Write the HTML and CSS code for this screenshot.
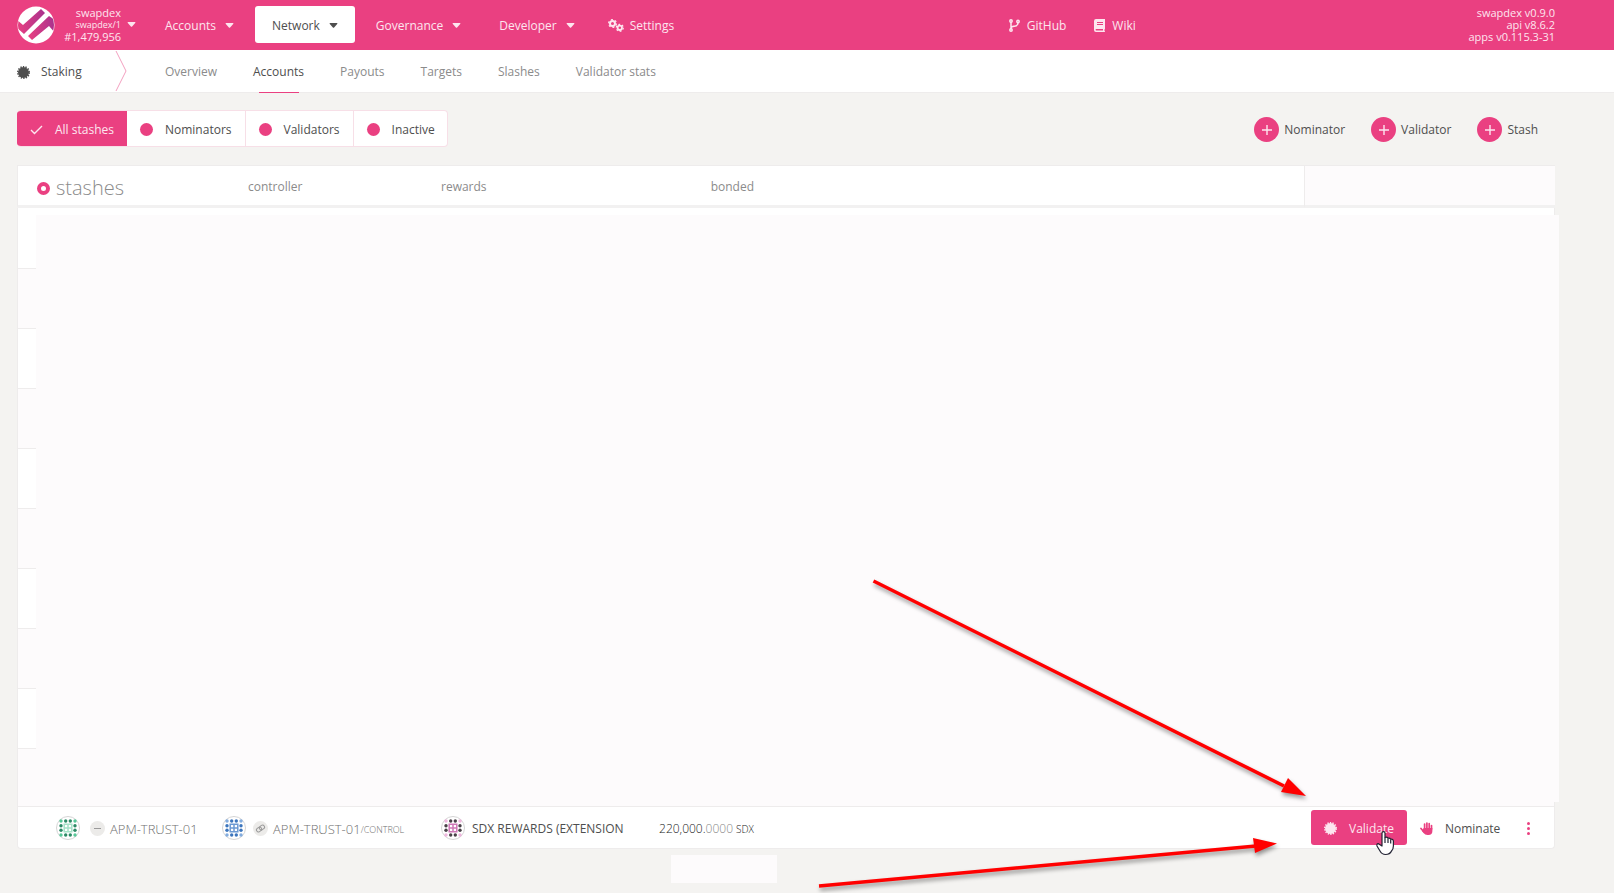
FILE: index.html
```html
<!DOCTYPE html>
<html lang="en">
<head>
<meta charset="utf-8">
<title>Staking accounts</title>
<link rel="stylesheet" href="styles.css">
</head>
<body>
<svg class="defs" aria-hidden="true">
  <defs>
    <linearGradient id="brand" x1="0" x2="1"><stop offset="0" stop-color="#ea4081"/><stop offset="1" stop-color="#a8328e"/></linearGradient>
    <symbol id="caret" viewBox="0 0 8 5"><path fill="currentColor" d="M.6 0h6.8q.9.300.300 1L4.600 4.600q-.6.500-1.200 0L.3 1Q-.3.300.600 0z"/></symbol>
    <symbol id="plus" viewBox="0 0 12 12"><path d="M6 1v10M1 6h10" stroke="currentColor" stroke-width="1.400" fill="none"/></symbol>
    <symbol id="cert" viewBox="0 0 20 20"><circle cx="10" cy="10" r="8.300" fill="currentColor"/><circle cx="10" cy="10" r="8.700" fill="none" stroke="currentColor" stroke-width="2.600" stroke-dasharray="2 1.904"/></symbol>
    <symbol id="ident" viewBox="0 0 24 24">
      <circle cx="12" cy="12" r="11.500" fill="#fff" stroke="#d4d4d4"/>
      <g fill="var(--dark)"><circle cx="9.700" cy="5" r="1.700"/><circle cx="14.300" cy="5" r="1.700"/><circle cx="9.700" cy="19" r="1.700"/><circle cx="14.300" cy="19" r="1.700"/><circle cx="5" cy="9.700" r="1.700"/><circle cx="5" cy="14.300" r="1.700"/><circle cx="19" cy="9.700" r="1.700"/><circle cx="19" cy="14.300" r="1.700"/></g>
      <g fill="var(--light)"><circle cx="5" cy="5" r="1.700"/><circle cx="19" cy="5" r="1.700"/><circle cx="5" cy="19" r="1.700"/><circle cx="19" cy="19" r="1.700"/></g>
      <path d="M8.200 8.200h7.600v7.600H8.200zM12 8.200v7.600M8.200 12h7.600" stroke="var(--mid)" stroke-width="1.500" fill="none"/>
    </symbol>
  </defs>
</svg>

<header class="topbar">
  <div class="brand">
    <svg class="logo" viewBox="0 0 38 38" aria-hidden="true">
      <defs><clipPath id="disc"><circle cx="19" cy="19" r="18"/></clipPath></defs>
      <circle cx="19" cy="19" r="18.500" fill="#fff"/>
      <g clip-path="url(#disc)" fill="url(#brand)">
        <path d="M0 14 6 19 24 3 28 7 7 28 0 22z"/>
        <path d="M11 30 32 10 38 14V27L32 20 15 34z"/>
      </g>
    </svg>
    <button class="chain" type="button">
      <span class="chain-text"><span>swapdex</span><span class="tiny">swapdex/1</span><span>#1,479,956</span></span>
      <svg class="caret" aria-hidden="true"><use href="#caret"/></svg>
    </button>
  </div>
  <nav class="menu" aria-label="Main">
    <a href="#accounts">Accounts<svg class="caret" aria-hidden="true"><use href="#caret"/></svg></a>
    <a class="current" href="#network">Network<svg class="caret" aria-hidden="true"><use href="#caret"/></svg></a>
    <a href="#governance">Governance<svg class="caret" aria-hidden="true"><use href="#caret"/></svg></a>
    <a href="#developer">Developer<svg class="caret" aria-hidden="true"><use href="#caret"/></svg></a>
    <a class="settings" href="#settings"><svg class="gears" viewBox="0 0 16 13" fill="none" stroke="currentColor" aria-hidden="true"><circle cx="4.500" cy="4.500" r="2.500" stroke-width="2"/><circle cx="4.500" cy="4.500" r="3.900" stroke-width="1.200" stroke-dasharray="2 2.080"/><circle cx="11.800" cy="8.800" r="2.200" stroke-width="1.800"/><circle cx="11.800" cy="8.800" r="3.500" stroke-width="1.200" stroke-dasharray="1.800 1.860"/></svg>Settings</a>
  </nav>
  <nav class="links" aria-label="External">
    <a href="#github"><svg width="11" height="13" viewBox="0 0 11 13" fill="none" stroke="currentColor" stroke-width="1.500" aria-hidden="true"><circle cx="2" cy="2" r="1.200"/><circle cx="9" cy="2.500" r="1.200"/><circle cx="2" cy="11" r="1.200"/><path d="M2 3v7M9 4c0 3-2 3-4 3.200C3.500 7.400 2 8 2 9"/></svg>GitHub</a>
    <a href="#wiki"><svg width="11" height="13" viewBox="0 0 11 13" aria-hidden="true"><path fill="currentColor" fill-rule="evenodd" d="M2 0h9v10l-.5.500v1.500l.5.500v.5H2q-2 0-2-2V2Q0 0 2 0zM3 3v1h6V3zm0 2v1h6V5zM2 10q-1 .7 0 1.500h7V10z"/></svg>Wiki</a>
  </nav>
  <div class="versions"><span>swapdex v0.9.0</span><span>api v8.6.2</span><span>apps v0.115.3-31</span></div>
</header>

<nav class="tabs" aria-label="Staking">
  <div class="section"><svg class="cert" aria-hidden="true"><use href="#cert"/></svg><span>Staking</span></div>
  <svg class="chevron" viewBox="0 0 12 42" aria-hidden="true"><path d="M1 1 11 21 1 41" fill="none" stroke="#f3a0c0"/></svg>
  <a href="#overview">Overview</a>
  <a class="active" href="#accounts">Accounts</a>
  <a href="#payouts">Payouts</a>
  <a href="#targets">Targets</a>
  <a href="#slashes">Slashes</a>
  <a href="#stats">Validator stats</a>
</nav>

<main>
  <div class="toolbar">
    <div class="filters">
      <button type="button" class="on"><svg class="mark" viewBox="0 0 13 13" aria-hidden="true"><path d="M1 7l3.500 3.500L12 3" fill="none" stroke="currentColor" stroke-width="1.400"/></svg>All stashes</button>
      <button type="button"><span class="mark dot"></span>Nominators</button>
      <button type="button"><span class="mark dot"></span>Validators</button>
      <button type="button"><span class="mark dot"></span>Inactive</button>
    </div>
    <div class="adders">
      <button type="button"><span class="round"><svg aria-hidden="true"><use href="#plus"/></svg></span>Nominator</button>
      <button type="button"><span class="round"><svg aria-hidden="true"><use href="#plus"/></svg></span>Validator</button>
      <button type="button"><span class="round"><svg aria-hidden="true"><use href="#plus"/></svg></span>Stash</button>
    </div>
  </div>

  <div class="stashes">
    <table>
      <colgroup><col class="c-stash"><col class="c-controller"><col class="c-rewards"><col class="c-bonded"><col><col class="c-actions"></colgroup>
      <thead>
        <tr>
          <th scope="col" class="title"><span class="ring"></span><span>stashes</span></th>
          <th scope="col" class="controller">controller</th>
          <th scope="col">rewards</th>
          <th scope="col" class="num">bonded</th>
          <td></td>
          <td class="blank"></td>
        </tr>
      </thead>
      <tbody>
        <tr><td colspan="6"></td></tr>
        <tr><td colspan="6"></td></tr>
        <tr><td colspan="6"></td></tr>
        <tr><td colspan="6"></td></tr>
        <tr><td colspan="6"></td></tr>
        <tr><td colspan="6"></td></tr>
        <tr><td colspan="6"></td></tr>
        <tr><td colspan="6"></td></tr>
        <tr><td colspan="6"></td></tr>
        <tr><td colspan="6"></td></tr>
        <tr class="account">
          <td class="first"><div class="address"><svg class="ident green" aria-hidden="true"><use href="#ident"/></svg><span class="badge"><svg viewBox="0 0 15 15" aria-hidden="true"><path d="M4 7.500h7" stroke="#9a9a9a" fill="none"/></svg></span><span class="name">APM-TRUST-01</span></div></td>
          <td><div class="address"><svg class="ident blue" aria-hidden="true"><use href="#ident"/></svg><span class="badge"><svg viewBox="0 0 15 15" aria-hidden="true"><g fill="none" stroke="#9a9a9a" transform="rotate(-35 7.500 7.500)"><rect x="3" y="5.500" width="5.500" height="4" rx="2"/><rect x="6.500" y="5.500" width="5.500" height="4" rx="2"/></g></svg></span><span class="name">APM-TRUST-01<small>/CONTROL</small></span></div></td>
          <td><div class="address"><svg class="ident pink" aria-hidden="true"><use href="#ident"/></svg><span class="name strong">SDX REWARDS (EXTENSION</span></div></td>
          <td class="num balance">220,000.<span class="faint">0000</span> <span class="unit">SDX</span></td>
          <td></td>
          <td>
            <div class="actions">
              <button type="button" class="primary"><svg class="cert" aria-hidden="true"><use href="#cert"/></svg>Validate</button>
              <button type="button"><svg class="hand" viewBox="0 0 13 13" aria-hidden="true"><g stroke="#ea4081" stroke-width="1.700" stroke-linecap="round" fill="none"><path d="M4.600 7V2M6.900 7V1M9.200 7V1.500M11.500 7V3.500M1 6.500l2.500 3"/></g><path fill="#ea4081" d="M3.700 6h8.700v3q0 4-4 4H7.500Q5 13 3.500 11L2 9z"/></svg>Nominate</button>
              <button type="button" class="more" aria-label="More actions"><span></span><span></span><span></span></button>
            </div>
          </td>
        </tr>
      </tbody>
    </table>
    <div class="cover"></div>
  </div>
  <div class="note"></div>
</main>

<svg class="annotations" viewBox="0 0 1614 893" aria-hidden="true">
  <g class="arrows" fill="#f00">
    <path d="M873.500 581 1284 786" stroke="#f00" stroke-width="3.500"/>
    <path d="M1306 796 1288 778 1281 792z"/>
    <path d="M819 886 1256 846" stroke="#f00" stroke-width="3.500"/>
    <path d="M1277 843.500 1253 838 1255 853z"/>
  </g>
  <g transform="translate(1376 831)" stroke="#222233" stroke-width="1.200" stroke-linejoin="round">
    <path d="M6 2q0-1.400 1.500-1.400T9 2v4.500q2-.8 3 .7 1.800-.6 2.700.9 2.300-.3 2.700 1.700V15q0 3-1.900 5-1.500 3.500-6 3.500-3.500 0-5.500-3.500L1 15q-.6-2.500 1.500-2.300L6 15z" fill="#fff"/>
    <path d="M9 6.500V12M12 7.500V12M14.700 8.500V12.500" fill="none"/>
  </g>
</svg>
</body>
</html>
```

FILE: styles.css
```css
* { box-sizing: border-box; }
:root { --pink: #ea4081; --text: #4e4e4e; --muted: #8b8b8b; --tint: #fdfbfc; --line: #eeecec; }
body { margin: 0; position: relative; min-height: 100vh; overflow-x: hidden; background: #f4f3f1; color: var(--text); font: 400 12px/18px "Open Sans", "Noto Sans", sans-serif; }
a { color: inherit; text-decoration: none; }
button { font: inherit; color: inherit; background: none; border: 0; padding: 0; margin: 0; cursor: pointer; }
svg { display: block; flex: none; }
.defs { position: absolute; width: 0; height: 0; }
.caret { width: 9px; height: 5px; }
.cert { width: 13px; height: 13px; }

.topbar { position: relative; display: flex; align-items: center; height: 50px; padding: 0 59px 1px 17px; background: var(--pink); color: #fde6ef; }
.brand { display: flex; align-items: center; justify-content: space-between; width: 119px; margin-right: 12px; }
.logo { width: 38px; height: 38px; }
.chain { display: flex; align-items: center; gap: 6px; }
.chain-text, .versions { display: flex; flex-direction: column; text-align: right; font-size: 11px; line-height: 12px; }
.tiny { font-size: 9px; }
.menu { display: flex; gap: 4px; }
.menu a { display: flex; align-items: center; justify-content: space-between; gap: 9px; height: 37px; padding: 2px 17px 0; border-radius: 3px; }
.menu .current { background: #fff; color: var(--text); }
.menu .settings { gap: 6px; padding-left: 12px; }
.gears { width: 16px; height: 13px; }
.links { position: absolute; left: 62.5%; display: flex; gap: 28px; padding-top: 2px; }
.links a { display: flex; align-items: center; gap: 7px; }
.versions { margin-left: auto; }

.tabs { display: flex; align-items: center; height: 43px; padding-left: 17px; background: #fff; border-bottom: 1px solid var(--line); color: var(--muted); }
.section { display: flex; align-items: center; gap: 11px; width: 98px; padding-top: 2px; color: var(--text); }
.chevron { width: 12px; height: 42px; margin-right: 20px; }
.tabs a { display: flex; flex-direction: column; justify-content: center; align-items: center; position: relative; height: 43px; padding: 2px 18px 0; }
.tabs .active { color: var(--text); }
.tabs .active::after { content: ""; position: absolute; bottom: 0; width: 40px; height: 1px; background: var(--pink); }

main { padding: 17px 59px 0 17px; }
.toolbar { display: flex; justify-content: space-between; align-items: center; height: 37px; margin-bottom: 18px; padding-right: 17px; }
.filters { display: flex; height: 37px; border: 1px solid #f7dfe7; border-left: 0; border-radius: 4px; background: #fff; overflow: hidden; }
.filters button { display: flex; align-items: center; gap: 12px; padding: 2px 13px 0; border-right: 1px solid #f7dfe7; }
.filters button:last-child { border-right: 0; padding-right: 12px; }
.filters .on { background: var(--pink); color: #fde6ef; border-right: 0; }
.mark { width: 13px; height: 13px; }
.dot { border-radius: 50%; background: var(--pink); }
.adders { display: flex; gap: 26px; padding-top: 2px; }
.adders button { display: flex; align-items: center; gap: 5px; }
.round { display: grid; place-items: center; width: 25px; height: 25px; border-radius: 50%; background: var(--pink); color: #fde6ef; }
.round svg { width: 12px; height: 12px; }

.stashes { position: relative; }
table { width: 100%; table-layout: fixed; border-collapse: separate; border-spacing: 0; }
th, td { padding: 0 8px; text-align: left; font-weight: 400; }
.c-stash { width: 197px; }
.c-controller { width: 219px; }
.c-rewards { width: 197px; }
.c-bonded { width: 132px; }
.c-actions { width: 251px; }
thead th, thead td { height: 43px; padding-top: 2px; background: #fff; border-top: 1px solid var(--line); border-bottom: 3px solid #f2f1f1; color: var(--muted); }
thead th:first-child { border-left: 1px solid var(--line); }
thead .title { padding: 4px 0 0 19px; font-size: 20px; font-weight: 300; line-height: 26px; white-space: nowrap; }
.ring { display: inline-block; width: 13px; height: 13px; margin-right: 6px; border: 4px solid var(--pink); border-radius: 50%; }
.controller { padding-left: 34px; }
.num { text-align: right; }
thead .blank { background: var(--tint); border-left: 1px solid var(--line); }
tbody td { height: 60px; background: #fff; border-bottom: 1px solid var(--line); }
tbody tr:nth-child(even) td { background: var(--tint); }
tbody tr:nth-child(1) td { height: 61px; }
tbody tr:nth-child(10) td { height: 58px; }
tbody td:first-child { border-left: 1px solid var(--line); }
tbody td:last-child { border-right: 1px solid var(--line); }
.account td { height: 42px; }
.account td.first { padding-left: 38px; border-bottom-left-radius: 4px; }
.account td:last-child { border-bottom-right-radius: 4px; padding: 0; }
.address { display: flex; align-items: center; color: var(--muted); }
.ident { width: 24px; height: 24px; margin-right: 7px; }
.green { --dark: #2d8a66; --light: #58c899; --mid: #a5e2c8; }
.blue { --dark: #3d76bd; --light: #83addf; --mid: #6b99d3; }
.pink { --dark: #4a4148; --light: #efb6de; --mid: #cf77b7; }
.badge { width: 15px; height: 15px; margin: 2px 5px 0 0; border-radius: 50%; background: #ecebe9; }
.first .badge { margin-left: 3px; }
.name { white-space: nowrap; font-size: 13px; font-weight: 300; padding-top: 3px; color: #707070; }
.name small { font-size: 9px; vertical-align: 1px; }
.name.strong { color: var(--text); font-size: 12px; font-weight: 400; }
.account .balance { padding-top: 2px; font-weight: 300; color: #222; white-space: nowrap; }
.faint { color: #888; }
.unit { font-size: 10px; }
.actions { display: flex; align-items: center; padding-left: 7px; }
.actions button { display: flex; align-items: center; gap: 12px; height: 35px; padding: 2px 13px 0; border-radius: 3px; }
.actions .primary { background: var(--pink); color: #fde6ef; }
.hand { width: 13px; height: 13px; }
.actions .more { flex-direction: column; justify-content: center; gap: 2px; padding: 2px 14px 0; }
.more span { width: 3px; height: 3px; border-radius: 50%; background: var(--pink); }
.cover { position: absolute; left: 19px; right: -4px; top: 50px; bottom: 47px; background: var(--tint); }
.note { width: 106px; height: 28px; margin: 6px 0 0 654px; background: var(--tint); }
.annotations { position: absolute; left: 0; top: 0; width: 1614px; height: 893px; pointer-events: none; }
.arrows { filter: drop-shadow(1px 3px 2px rgba(0, 0, 0, .4)); }
```
